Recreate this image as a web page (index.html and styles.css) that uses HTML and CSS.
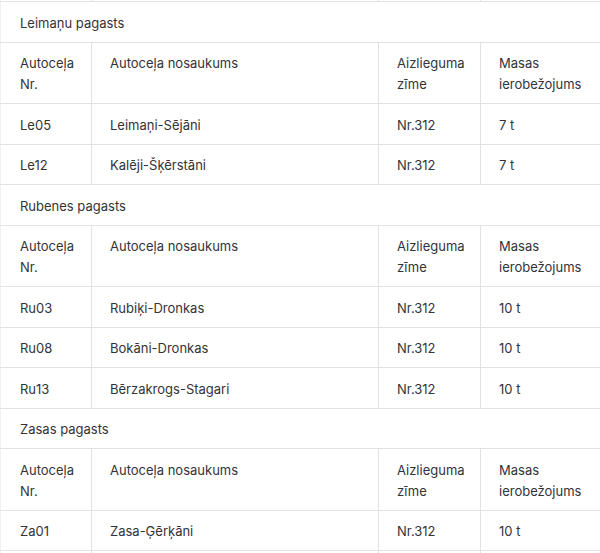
FILE: index.html
```html
<!DOCTYPE html>
<html lang="lv">
<head>
<meta charset="utf-8">
<link rel="stylesheet" href="styles.css">
</head>
<body>
<div class="wrap">
<table class="roads">
  <colgroup>
    <col class="c1"><col class="c2"><col class="c3"><col class="c4">
  </colgroup>
  <tbody>
    <tr class="stub"><td></td><td></td><td></td><td></td></tr>
    <tr class="group"><td colspan="4">Leimaņu pagasts</td></tr>
    <tr class="head"><td>Autoceļa<br>Nr.</td><td>Autoceļa nosaukums</td><td>Aizlieguma<br>zīme</td><td>Masas<br>ierobežojums</td></tr>
    <tr><td>Le05</td><td>Leimaņi-Sējāni</td><td>Nr.312</td><td>7 t</td></tr>
    <tr><td>Le12</td><td>Kalēji-Šķērstāni</td><td>Nr.312</td><td>7 t</td></tr>
    <tr class="group"><td colspan="4">Rubenes pagasts</td></tr>
    <tr class="head"><td>Autoceļa<br>Nr.</td><td>Autoceļa nosaukums</td><td>Aizlieguma<br>zīme</td><td>Masas<br>ierobežojums</td></tr>
    <tr><td>Ru03</td><td>Rubiķi-Dronkas</td><td>Nr.312</td><td>10 t</td></tr>
    <tr><td>Ru08</td><td>Bokāni-Dronkas</td><td>Nr.312</td><td>10 t</td></tr>
    <tr><td>Ru13</td><td>Bērzakrogs-Stagari</td><td>Nr.312</td><td>10 t</td></tr>
    <tr class="group"><td colspan="4">Zasas pagasts</td></tr>
    <tr class="head"><td>Autoceļa<br>Nr.</td><td>Autoceļa nosaukums</td><td>Aizlieguma<br>zīme</td><td>Masas<br>ierobežojums</td></tr>
    <tr><td>Za01</td><td>Zasa-Ģērķāni</td><td>Nr.312</td><td>10 t</td></tr>
    <tr class="tail"><td></td><td></td><td></td><td></td></tr>
  </tbody>
</table>
</div>
</body>
</html>
```
FILE: styles.css
```css
html, body {
  margin: 0;
  padding: 0;
  background: #ffffff;
}
.wrap {
  width: 600px;
  height: 553px;
  overflow: hidden;
}
.roads {
  width: 620px;
  border-collapse: collapse;
  table-layout: fixed;
  font-family: Inter, "Noto Sans", sans-serif;
  font-size: 13px;
  line-height: 21px;
  color: #333338;
}
.c1 { width: 91px; }
.c2 { width: 287px; }
.c3 { width: 102px; }
.c4 { width: 140px; }
.roads td {
  border: 1px solid #e1e2e8;
  padding: 10.5px 18px 8px;
  vertical-align: top;
  text-align: left;
}
.roads tr td:first-child {
  padding-left: 19px;
  border-left-color: #f0f0f3;
}
.roads .stub td {
  padding: 0;
  height: 1px;
  border-top: none;
}
.roads .tail td {
  padding: 0;
  height: 20px;
}
.roads .group td {
  border-top-color: #f0f0f3;
  border-right: none;
}
```
